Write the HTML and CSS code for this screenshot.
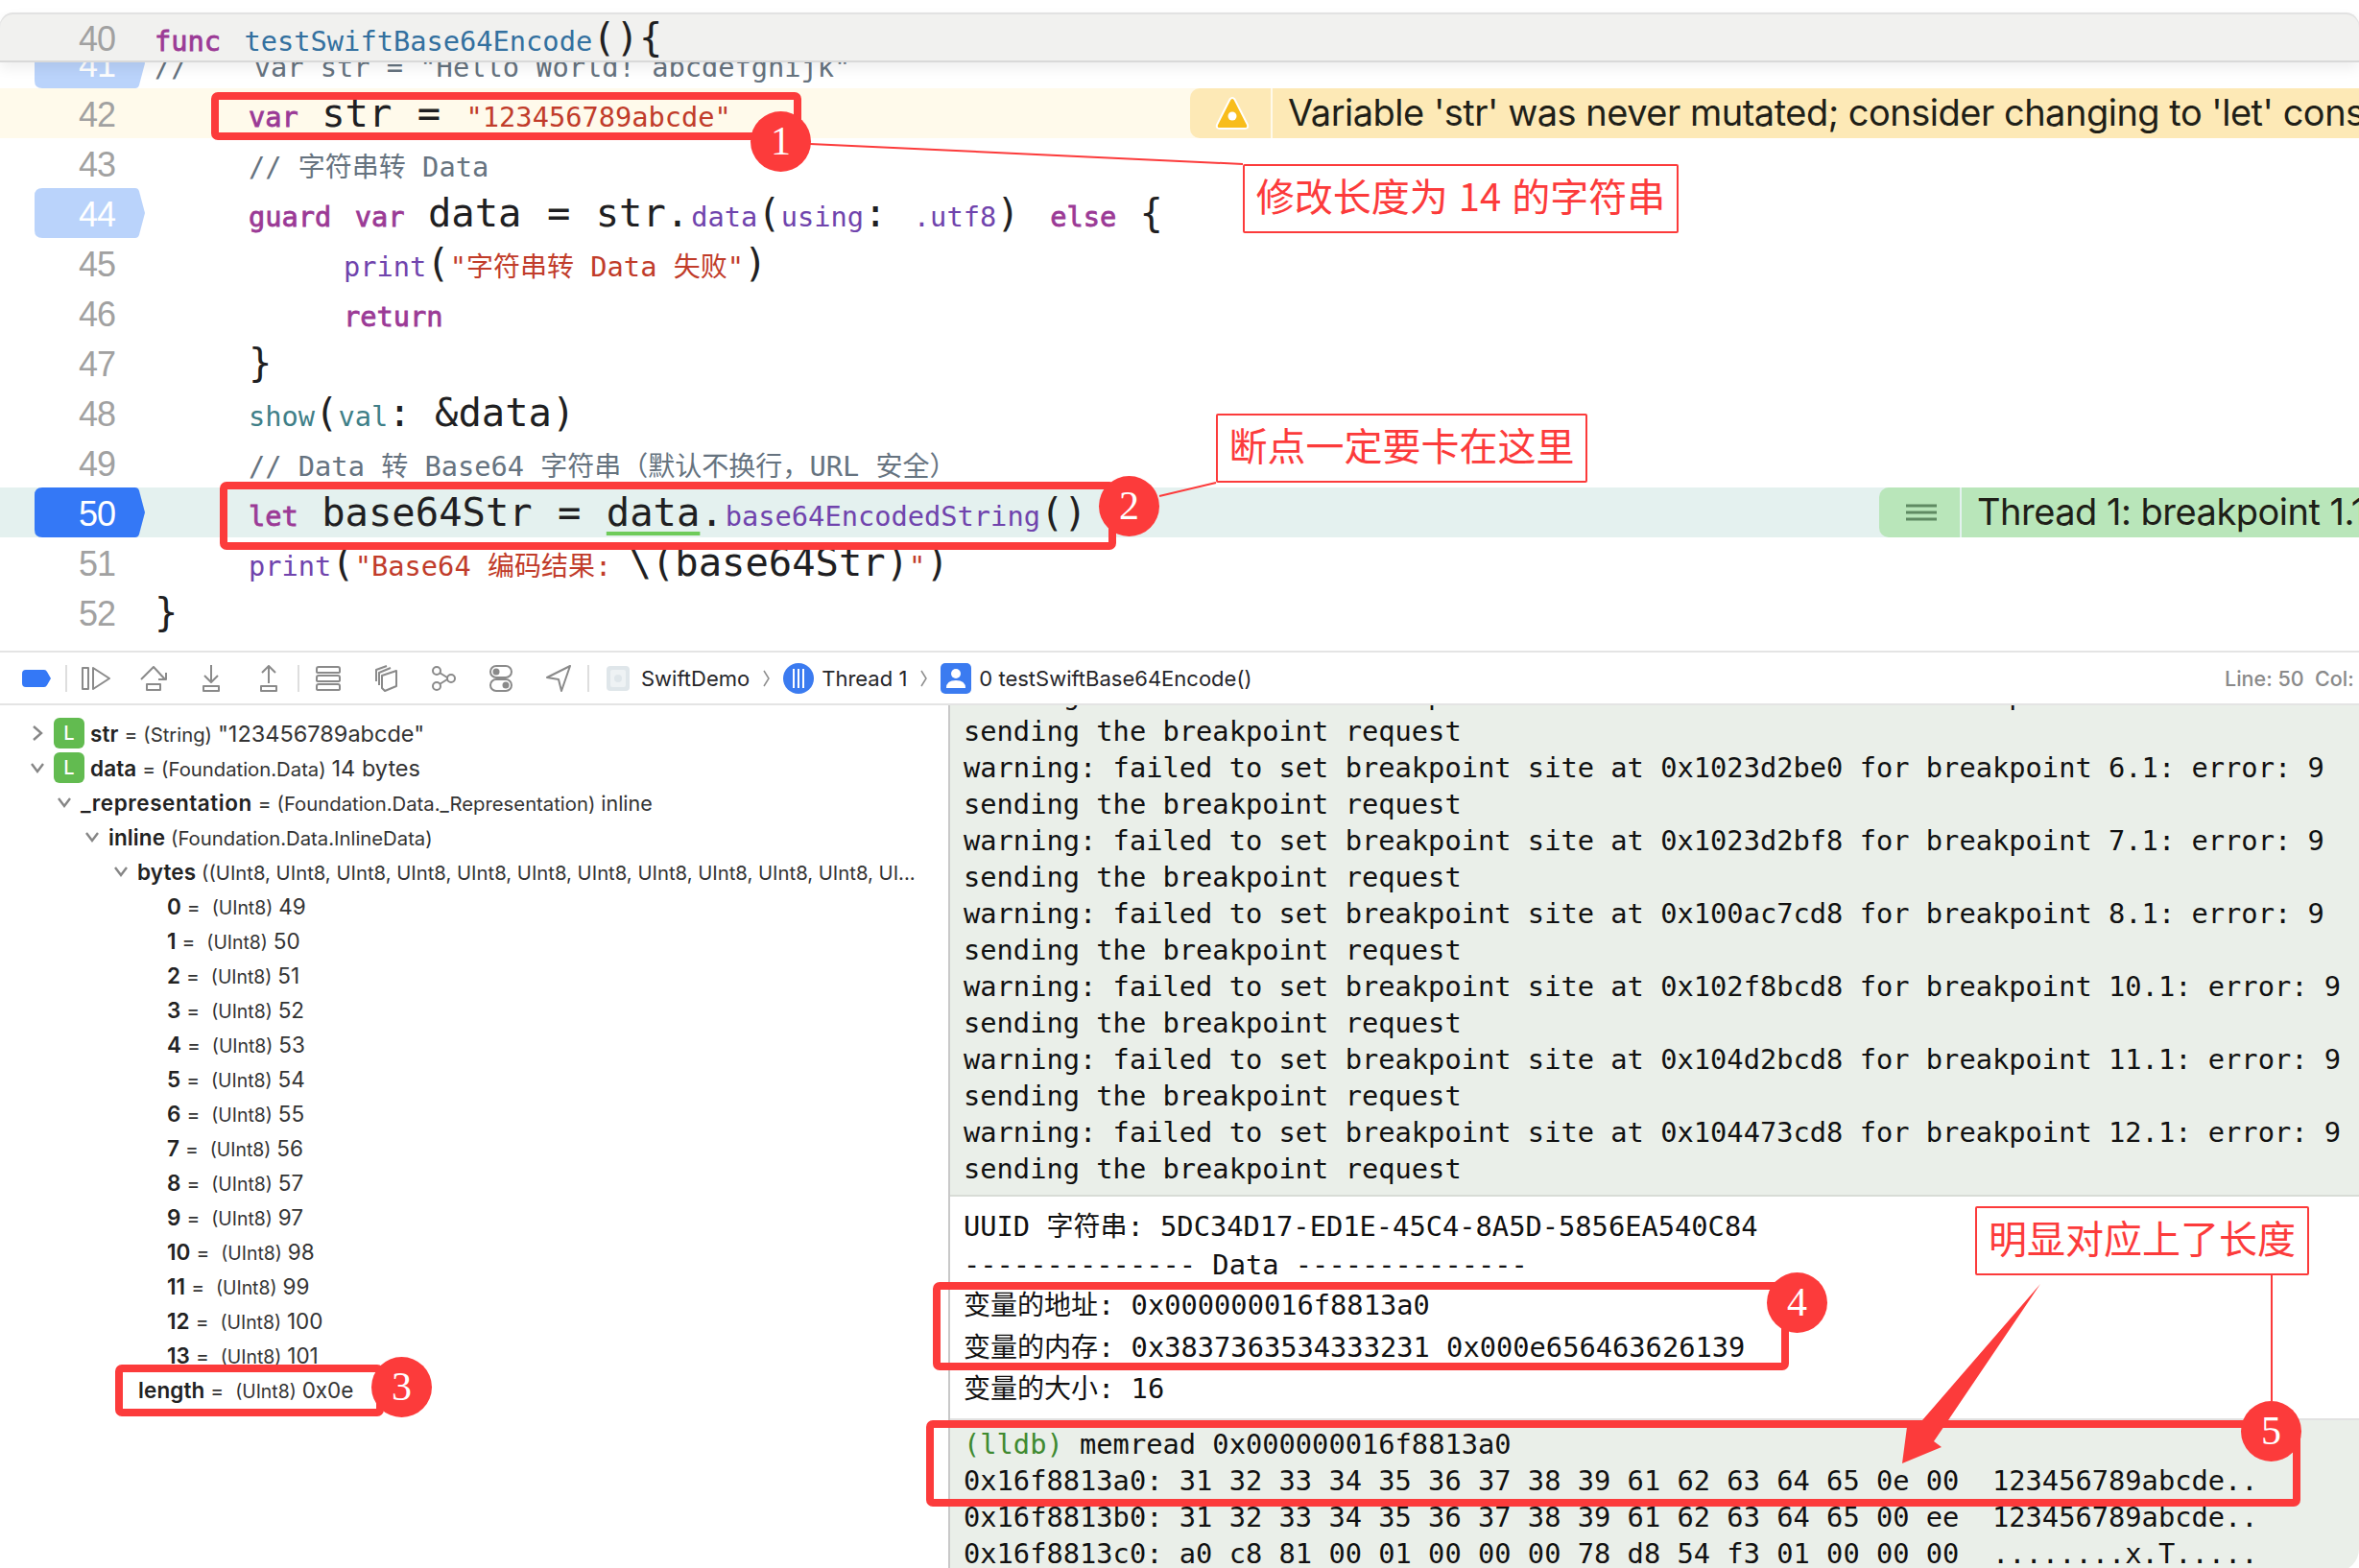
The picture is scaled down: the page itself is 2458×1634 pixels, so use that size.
FILE: index.html
```html
<!DOCTYPE html>
<html lang="zh">
<head>
<meta charset="utf-8">
<title>testSwiftBase64Encode</title>
<link rel="stylesheet" href="styles.css">
</head>
<body>
<div class="window">
  <section class="editor">
    <div class="row sticky"><div class="num">40</div><pre class="code"><span class="s kw">func</span> <span class="s fn">testSwiftBase64Encode</span>(){</pre></div>
    <div class="row"><svg class="tag" viewBox="0 0 113 52" preserveAspectRatio="none"><path class="tag-light" d="M8 0H103Q106 0 107 3L113 26L107 49Q106 52 103 52H8Q0 52 0 44V8Q0 0 8 0Z"/></svg><div class="num on-tag">41</div><pre class="code"><span class="s cm">//    var str = "Hello World! abcdefghijk"</span></pre></div>
    <div class="row warn-row"><div class="num">42</div><pre class="code i1"><span class="s kw">var</span> <span class="warn-u">str</span> <span class="eq">=</span> <span class="s st">"123456789abcde"</span></pre>
      <div class="issue warn"><div class="issue-icon"><svg width="36" height="36" viewBox="0 0 36 36"><path class="tri" d="M15.5 3.5Q18 0.5 20.5 3.5L34 30Q35 34 31 34H5Q1 34 2 30Z"/><circle class="tri-dot" cx="18" cy="21" r="4.5"/></svg></div><div class="issue-text">Variable 'str' was never mutated; consider changing to 'let' constant instead</div></div>
    </div>
    <div class="row"><div class="num">43</div><pre class="code i1"><span class="s cm">// <span class="z">字符串转</span> Data</span></pre></div>
    <div class="row"><svg class="tag" viewBox="0 0 113 52" preserveAspectRatio="none"><path class="tag-light" d="M8 0H103Q106 0 107 3L113 26L107 49Q106 52 103 52H8Q0 52 0 44V8Q0 0 8 0Z"/></svg><div class="num on-tag">44</div><pre class="code i1"><span class="s kw">guard</span> <span class="s kw">var</span> data <span class="eq">=</span> str<span class="dot">.</span><span class="s me">data</span>(<span class="s me">using</span>: <span class="s me nudge">.utf8</span>)<span class="s tight">  </span><span class="s kw">else</span> {</pre></div>
    <div class="row"><div class="num">45</div><pre class="code i2"><span class="s me">print</span>(<span class="s st">"<span class="z">字符串转</span> Data <span class="z">失败</span>"</span>)</pre></div>
    <div class="row"><div class="num">46</div><pre class="code i2"><span class="s kw">return</span></pre></div>
    <div class="row"><div class="num">47</div><pre class="code i1">}</pre></div>
    <div class="row"><div class="num">48</div><pre class="code i1"><span class="s tl">show</span>(<span class="s tl">val</span>: &amp;data)</pre></div>
    <div class="row"><div class="num">49</div><pre class="code i1"><span class="s cm">// Data <span class="z">转</span> Base64 <span class="z">字符串（默认不换行，</span>URL <span class="z">安全）</span></span></pre></div>
    <div class="row hit-row"><svg class="tag" viewBox="0 0 113 52" preserveAspectRatio="none"><path class="tag-solid" d="M8 0H103Q106 0 107 3L113 26L107 49Q106 52 103 52H8Q0 52 0 44V8Q0 0 8 0Z"/></svg><div class="num on-tag">50</div><pre class="code i1"><span class="s kw">let</span> base64Str <span class="eq">=</span> <span class="ok-u">data</span><span class="dot">.</span><span class="s me">base64EncodedString</span>()</pre>
      <div class="issue hit"><div class="issue-icon"><svg width="32" height="18" viewBox="0 0 32 18"><path class="menu" d="M0 2H32M0 9H32M0 16H32"/></svg></div><div class="issue-text">Thread 1: breakpoint 1.1 (1)</div></div>
    </div>
    <div class="row"><div class="num">51</div><pre class="code i1"><span class="s me">print</span>(<span class="s st">"Base64 <span class="z">编码结果</span>: </span>\(base64Str)<span class="s st">"</span>)</pre></div>
    <div class="row"><div class="num">52</div><pre class="code">}</pre></div>
    <div class="row"><div class="num">53</div></div>
  </section>

  <nav class="debugbar">
    <span class="tb"><svg width="30" height="18" viewBox="0 0 30 18"><path class="bp" d="M4 0H23Q25 0 26 2L30 9L26 16Q25 18 23 18H4Q0 18 0 14V4Q0 0 4 0Z"/></svg></span>
    <i class="tb-div"></i>
    <span class="tb"><svg width="30" height="24" viewBox="0 0 30 24"><path class="ic" d="M1 1H7V23H1ZM12 1L29 12L12 23Z"/></svg></span>
    <span class="tb"><svg width="28" height="26" viewBox="0 0 28 26"><path class="ic" d="M1 14L14 1L26 14M19 14H27V7M7 19H21V25H7Z"/></svg></span>
    <span class="tb"><svg width="20" height="28" viewBox="0 0 20 28"><path class="ic" d="M10 0V17M3 11L10 18L17 11M2 22H18V27H2Z"/></svg></span>
    <span class="tb"><svg width="20" height="28" viewBox="0 0 20 28"><path class="ic" d="M10 19V2M3 8L10 1L17 8M2 22H18V27H2Z"/></svg></span>
    <i class="tb-div"></i>
    <span class="tb"><svg width="26" height="26" viewBox="0 0 26 26"><path class="ic" d="M3 1H23Q25 1 25 3V6Q25 7 23 7H3Q1 7 1 6V3Q1 1 3 1ZM3 10H23Q25 10 25 12V15Q25 16 23 16H3Q1 16 1 15V12Q1 10 3 10ZM3 19H23Q25 19 25 21V24Q25 25 23 25H3Q1 25 1 24V21Q1 19 3 19Z"/></svg></span>
    <span class="tb"><svg width="24" height="28" viewBox="0 0 24 28"><path class="ic" d="M8 11L23 6V22L11 27L8 24ZM5 21V8L17 3M2 17V5L13 1"/></svg></span>
    <span class="tb"><svg width="26" height="26" viewBox="0 0 26 26"><circle class="ic" cx="6" cy="5" r="4"/><circle class="ic" cx="21" cy="13" r="4"/><circle class="ic" cx="6" cy="21" r="4"/><path class="ic" d="M9 7L17 12M9 19L17 14"/></svg></span>
    <span class="tb"><svg width="24" height="28" viewBox="0 0 24 28"><rect class="ic" x="1" y="1" width="22" height="12" rx="6"/><circle class="ic-fill" cx="7" cy="7" r="3.5"/><rect class="ic" x="1" y="15" width="22" height="12" rx="6"/><circle class="ic-fill" cx="17" cy="21" r="3.5"/></svg></span>
    <span class="tb"><svg width="26" height="28" viewBox="0 0 26 28"><path class="ic" d="M25 1L1 13L13 15L16 27Z"/></svg></span>
    <i class="tb-div"></i>
    <svg class="crumb-app" width="24" height="26" viewBox="0 0 24 26"><rect class="app-bg" width="24" height="26" rx="4"/><rect class="app-in" x="4" y="4" width="16" height="18" rx="2"/><circle class="app-bg" cx="12" cy="13" r="4"/></svg>
    <span class="crumb">SwiftDemo</span>
    <svg class="sep" width="7" height="18" viewBox="0 0 7 18"><path d="M1 1L6 9L1 17"/></svg>
    <svg class="crumb-ic" width="32" height="32" viewBox="0 0 32 32"><circle class="blue" cx="16" cy="16" r="16"/><path class="white-line" d="M11 6V26M16 6V26M21 6V26"/></svg>
    <span class="crumb">Thread 1</span>
    <svg class="sep" width="7" height="18" viewBox="0 0 7 18"><path d="M1 1L6 9L1 17"/></svg>
    <svg class="crumb-ic" width="32" height="32" viewBox="0 0 32 32"><rect class="blue" width="32" height="32" rx="5"/><circle class="white" cx="16" cy="11" r="5"/><path class="white" d="M6 26Q6 18 16 18Q26 18 26 26Z"/></svg>
    <span class="crumb">0 testSwiftBase64Encode()</span>
    <span class="pos">Line: 50&nbsp;&nbsp;Col: 1</span>
  </nav>

  <div class="bottom">
    <section class="vars">
      <div class="v d0"><svg class="chev" width="12" height="18" viewBox="0 0 12 18"><path d="M2 2L10 9L2 16"/></svg><b class="lbadge">L</b><span class="vt"><b>str</b> = <span class="ty">(String)</span> <span class="val">"123456789abcde"</span></span></div>
      <div class="v d0"><svg class="chev" width="16" height="12" viewBox="0 0 16 12"><path d="M2 2L8 10L14 2"/></svg><b class="lbadge">L</b><span class="vt"><b>data</b> = <span class="ty">(Foundation.Data)</span> <span class="val">14 bytes</span></span></div>
      <div class="v d1"><svg class="chev" width="16" height="12" viewBox="0 0 16 12"><path d="M2 2L8 10L14 2"/></svg><span class="vt"><b>_representation</b> = <span class="ty">(Foundation.Data._Representation)</span> <span class="val inl">inline</span></span></div>
      <div class="v d2"><svg class="chev" width="16" height="12" viewBox="0 0 16 12"><path d="M2 2L8 10L14 2"/></svg><span class="vt"><b>inline</b> <span class="ty">(Foundation.Data.InlineData)</span></span></div>
      <div class="v d3"><svg class="chev" width="16" height="12" viewBox="0 0 16 12"><path d="M2 2L8 10L14 2"/></svg><span class="vt"><b>bytes</b> <span class="ty">((UInt8, UInt8, UInt8, UInt8, UInt8, UInt8, UInt8, UInt8, UInt8, UInt8, UInt8, UI...</span></span></div>
      <div class="v d4"><span class="vt"><b>0</b> = <span class="ty">(UInt8)</span> <span class="val">49</span></span></div>
      <div class="v d4"><span class="vt"><b>1</b> = <span class="ty">(UInt8)</span> <span class="val">50</span></span></div>
      <div class="v d4"><span class="vt"><b>2</b> = <span class="ty">(UInt8)</span> <span class="val">51</span></span></div>
      <div class="v d4"><span class="vt"><b>3</b> = <span class="ty">(UInt8)</span> <span class="val">52</span></span></div>
      <div class="v d4"><span class="vt"><b>4</b> = <span class="ty">(UInt8)</span> <span class="val">53</span></span></div>
      <div class="v d4"><span class="vt"><b>5</b> = <span class="ty">(UInt8)</span> <span class="val">54</span></span></div>
      <div class="v d4"><span class="vt"><b>6</b> = <span class="ty">(UInt8)</span> <span class="val">55</span></span></div>
      <div class="v d4"><span class="vt"><b>7</b> = <span class="ty">(UInt8)</span> <span class="val">56</span></span></div>
      <div class="v d4"><span class="vt"><b>8</b> = <span class="ty">(UInt8)</span> <span class="val">57</span></span></div>
      <div class="v d4"><span class="vt"><b>9</b> = <span class="ty">(UInt8)</span> <span class="val">97</span></span></div>
      <div class="v d4"><span class="vt"><b>10</b> = <span class="ty">(UInt8)</span> <span class="val">98</span></span></div>
      <div class="v d4"><span class="vt"><b>11</b> = <span class="ty">(UInt8)</span> <span class="val">99</span></span></div>
      <div class="v d4"><span class="vt"><b>12</b> = <span class="ty">(UInt8)</span> <span class="val">100</span></span></div>
      <div class="v d4"><span class="vt"><b>13</b> = <span class="ty">(UInt8)</span> <span class="val">101</span></span></div>
      <div class="v d5"><span class="vt"><b>length</b> = <span class="ty">(UInt8)</span> <span class="val">0x0e</span></span></div>
    </section>
    <section class="console">
      <pre class="log-a">warning: failed to set breakpoint site at 0x1023d2bd0 for breakpoint 5.1: error: 9
sending the breakpoint request
warning: failed to set breakpoint site at 0x1023d2be0 for breakpoint 6.1: error: 9
sending the breakpoint request
warning: failed to set breakpoint site at 0x1023d2bf8 for breakpoint 7.1: error: 9
sending the breakpoint request
warning: failed to set breakpoint site at 0x100ac7cd8 for breakpoint 8.1: error: 9
sending the breakpoint request
warning: failed to set breakpoint site at 0x102f8bcd8 for breakpoint 10.1: error: 9
sending the breakpoint request
warning: failed to set breakpoint site at 0x104d2bcd8 for breakpoint 11.1: error: 9
sending the breakpoint request
warning: failed to set breakpoint site at 0x104473cd8 for breakpoint 12.1: error: 9
sending the breakpoint request</pre>
      <div class="log-b">
        <pre class="ln">UUID <span class="z">字符串</span>: 5DC34D17-ED1E-45C4-8A5D-5856EA540C84</pre>
        <pre class="ln gap">-------------- Data --------------</pre>
        <pre class="ln cjk gap"><span class="z">变量的地址</span>: 0x000000016f8813a0</pre>
        <pre class="ln cjk"><span class="z">变量的内存</span>: 0x3837363534333231 0x000e656463626139</pre>
        <pre class="ln cjk"><span class="z">变量的大小</span>: 16</pre>
      </div>
      <pre class="log-c"><span class="lldb">(lldb)</span> memread 0x000000016f8813a0
0x16f8813a0: 31 32 33 34 35 36 37 38 39 61 62 63 64 65 0e 00  123456789abcde..
0x16f8813b0: 31 32 33 34 35 36 37 38 39 61 62 63 64 65 00 ee  123456789abcde..
0x16f8813c0: a0 c8 81 00 01 00 00 00 78 d8 54 f3 01 00 00 00  ........x.T.....</pre>
    </section>
  </div>

  <div class="notes">
    <svg class="leaders" width="2458" height="1634" viewBox="0 0 2458 1634">
      <path class="leader" d="M844 150L1295 171M1208 517L1267 503M2367 1329V1460"/>
      <path class="arrow" d="M2126 1338L2030 1480L2015 1502L2023 1508L1982 1525L1987 1487L2003 1480Z"/>
    </svg>
    <div class="box b1"></div>
    <div class="box b2"></div>
    <div class="box b3"></div>
    <div class="box b4"></div>
    <div class="box b5"></div>
    <div class="badge c1">1</div>
    <div class="badge c2">2</div>
    <div class="badge c3">3</div>
    <div class="badge c4">4</div>
    <div class="badge c5">5</div>
    <div class="callout t1">修改长度为 14 的字符串</div>
    <div class="callout t2">断点一定要卡在这里</div>
    <div class="callout t3">明显对应上了长度</div>
  </div>
</div>
</body>
</html>
```
FILE: styles.css
```css
* { box-sizing: border-box; }
html, body { margin: 0; padding: 0; background: #fff; }
pre { margin: 0; }
.window {
  position: relative;
  width: 2458px;
  height: 1634px;
  overflow: hidden;
  display: flex;
  flex-direction: column;
  font-family: "Inter", "Noto Sans CJK SC", sans-serif;
  color: #1f1f22;
}

/* editor */
.editor {
  position: relative;
  height: 678px;
  padding-top: 40px;
  overflow: hidden;
  flex: none;
}
.row {
  position: relative;
  display: flex;
  height: 52px;
  overflow: hidden;
}
.sticky {
  position: absolute;
  z-index: 3;
  top: 13px;
  left: 0;
  width: 100%;
  background: #f1f1ef;
  border-radius: 14px 14px 0 0;
  box-shadow: inset 0 2px 0 #e2e2e2, inset 0 -2px 0 #d9d9d9, 0 6px 14px rgba(0, 0, 0, .07);
}
.sticky.row { overflow: visible; }
.num {
  position: relative;
  z-index: 1;
  flex: none;
  width: 120px;
  text-align: right;
  font-family: "Liberation Sans", sans-serif;
  font-size: 36px;
  line-height: 55px;
  letter-spacing: -1px;
  color: #a1a1a1;
}
.num.on-tag { color: #fff; }
.tag {
  position: absolute;
  left: 36px;
  top: 0;
  width: 115px;
  height: 52px;
}
.tag-light { fill: #bad3fb; }
.tag-solid { fill: #3478f6; }
.code {
  flex: 1;
  min-width: 0;
  margin-left: 41px;
  font-family: "DejaVu Sans Mono", "Noto Sans CJK SC", monospace;
  font-size: 40.5px;
  line-height: 52px;
  color: #1f1f22;
}
.code.i1 { padding-left: 98px; }
.code.i2 { padding-left: 197px; }
.s { font-size: 28.7px; }
.z { font-size: 28px; }
.kw { color: #9b3a96; -webkit-text-stroke: .8px #9b3a96; }
.fn { color: #33709f; }
.st { color: #c13c2a; }
.me { color: #7044ad; }
.tl { color: #3f7f88; }
.cm { color: #66737f; }
.eq { margin: 0 2px; }
.dot { margin-right: 2px; }
.nudge { margin-left: 3px; }
.tight { margin-right: -3px; }
.warn-u {
  text-decoration: underline 4px #f5bf3b;
  text-decoration-skip-ink: none;
  text-underline-offset: 6px;
}
.ok-u {
  text-decoration: underline 4px #6ecb5a;
  text-decoration-skip-ink: none;
  text-underline-offset: 6px;
}
.warn-row { background: #fffaeb; }
.hit-row { background: #e4f1ef; }
.issue { flex: none; display: flex; gap: 2px; height: 52px; }
.warn { width: 1218px; }
.hit { width: 500px; }
.issue-icon {
  flex: none;
  width: 84px;
  padding-left: 3px;
  display: flex;
  align-items: center;
  justify-content: center;
  border-radius: 10px 0 0 10px;
}
.issue-text {
  flex: 1;
  padding-left: 16px;
  font-size: 38px;
  letter-spacing: -.5px;
  line-height: 50px;
  white-space: nowrap;
  overflow: hidden;
  color: #1f1f18;
}
.warn .issue-icon, .warn .issue-text { background: #fde9b6; }
.hit .issue-icon, .hit .issue-text { background: #b9e6ba; }
.tri { fill: #f8bd1c; stroke: #fff; stroke-width: 2; }
.tri-dot { fill: #fff; }
.menu { stroke: #5f8a62; stroke-width: 3; fill: none; }

/* debug bar */
.debugbar {
  flex: none;
  height: 57px;
  display: flex;
  align-items: center;
  padding-left: 8px;
  border-top: 2px solid #e4e4e4;
  border-bottom: 2px solid #e4e4e4;
  background: #fff;
}
.tb {
  flex: none;
  width: 60px;
  height: 30px;
  display: flex;
  align-items: center;
  justify-content: center;
}
.tb-div { flex: none; width: 2px; height: 28px; background: #dedede; }
.bp { fill: #3478f6; }
.ic { fill: none; stroke: #8a8a8a; stroke-width: 2; stroke-linejoin: round; }
.ic-fill { fill: #8a8a8a; }
.app-bg { fill: #dfe6ea; }
.app-in { fill: #eef2f4; }
.crumb-app { flex: none; margin-left: 18px; margin-right: 12px; }
.crumb { flex: none; font-size: 22px; color: #26262a; white-space: nowrap; }
.sep { flex: none; margin: 0 14px; }
.sep path { fill: none; stroke: #8d8d8d; stroke-width: 1.5; }
.crumb-ic { flex: none; margin-right: 8px; }
.blue { fill: #3b7bf0; }
.white { fill: #fff; }
.white-line { stroke: #fff; stroke-width: 2; fill: none; }
.pos {
  margin-left: auto;
  width: 140px;
  flex: none;
  font-size: 21.5px;
  font-weight: 500;
  color: #8a8a8a;
  white-space: nowrap;
  overflow: hidden;
}

/* bottom */
.bottom { flex: 1; min-height: 0; display: flex; }
.vars { flex: none; width: 988px; padding-top: 11px; }
.v {
  display: flex;
  align-items: center;
  height: 36px;
  font-size: 21px;
  color: #333;
}
.vt { white-space: nowrap; }
.v b { font-weight: 600; font-size: 22.5px; letter-spacing: .1px; color: #222; }
.ty { font-size: 20.3px; }
.val { font-size: 23.5px; }
.val.inl { font-size: 21.5px; }
.d1 .vt b { letter-spacing: .55px; }
.d4 .ty, .d5 .ty { margin-left: 6px; font-size: 19.4px; }
.d4 .val, .d5 .val { font-size: 22.5px; }
.chev { flex: none; }
.chev path { fill: none; stroke: #868686; stroke-width: 2.4; }
.v b.lbadge {
  flex: none;
  width: 32px;
  height: 32px;
  margin-right: 6px;
  border-radius: 6px;
  background: #62bb50;
  color: #fff;
  text-align: center;
  font-size: 20px;
  line-height: 32px;
  font-weight: 500;
}
.d0 { padding-left: 31px; }
.d0 .chev { width: 16px; margin-right: 9px; }
.d1 { padding-left: 59px; }
.d2 { padding-left: 88px; }
.d3 { padding-left: 118px; }
.d1 .chev, .d2 .chev, .d3 .chev { margin-right: 9px; }
.d4 { padding-left: 174px; }
.d5 { padding-left: 144px; }

.console {
  flex: 1;
  min-width: 0;
  display: flex;
  flex-direction: column;
  border-left: 2px solid #c9c9c9;
  font-family: "DejaVu Sans Mono", "Noto Sans CJK SC", monospace;
  font-size: 28.73px;
  line-height: 38px;
  color: #111;
}
.console pre { font: inherit; line-height: inherit; }
.log-a {
  flex: none;
  height: 512px;
  padding: 0 0 0 14px;
  overflow: hidden;
  background: #eaefe9;
  border-bottom: 2px solid #d8dcd6;
}
.log-a::before { content: ""; display: block; margin-top: -30px; }
.log-b { flex: none; height: 231px; padding: 12px 0 0 14px; background: #fff; }
.ln { height: 38px; }
.gap { margin-top: 2px; }
.console .cjk { height: 43.5px; line-height: 43.5px; }
.log-c {
  flex: 1;
  padding: 6px 0 0 14px;
  background: #eaefe9;
  border-top: 2px solid #e2e2e2;
  border-bottom-right-radius: 24px;
}
.lldb { color: #3f8a30; }

/* annotations */
.notes { position: absolute; inset: 0; z-index: 5; pointer-events: none; }
.leaders { position: absolute; left: 0; top: 0; }
.leader { fill: none; stroke: #fc3b3b; stroke-width: 2; }
.arrow { fill: #fc3b3b; }
.box { position: absolute; border: 8px solid #fc3b3b; border-radius: 7px; }
.b1 { left: 220px; top: 96px; width: 615px; height: 50px; }
.b2 { left: 229px; top: 502px; width: 934px; height: 71px; }
.b3 { left: 120px; top: 1422px; width: 280px; height: 54px; }
.b4 { left: 972px; top: 1336px; width: 892px; height: 92px; }
.b5 { left: 965px; top: 1480px; width: 1432px; height: 90px; }
.badge {
  position: absolute;
  width: 63px;
  height: 63px;
  border-radius: 50%;
  background: #fc3b3b;
  color: #fff;
  font-family: "Liberation Serif", serif;
  font-size: 42px;
  line-height: 63px;
  text-align: center;
}
.c1 { left: 782px; top: 116px; }
.c2 { left: 1145px; top: 496px; }
.c3 { left: 387px; top: 1414px; }
.c4 { left: 1841px; top: 1326px; }
.c5 { left: 2335px; top: 1460px; }
.callout {
  position: absolute;
  border: 2px solid #fc3b3b;
  border-radius: 2px;
  background: #fff;
  color: #fc3b3b;
  font-family: "Noto Sans CJK SC", sans-serif;
  font-size: 40px;
  line-height: 60px;
  word-spacing: 2px;
  text-align: center;
  white-space: pre;
}
.t1 { left: 1295px; top: 171px; width: 454px; height: 72px; }
.t2 { left: 1267px; top: 431px; width: 387px; height: 72px; }
.t3 { left: 2058px; top: 1257px; width: 348px; height: 72px; }
```
